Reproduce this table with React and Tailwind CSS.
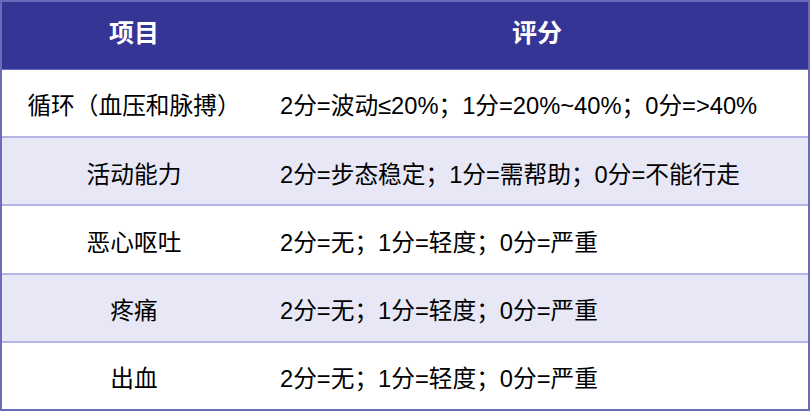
export default function App() {
  const rows = [
    {
      item: "循环（血压和脉搏）",
      score: "2分=波动≤20%；1分=20%~40%；0分=>40%",
    },
    { item: "活动能力", score: "2分=步态稳定；1分=需帮助；0分=不能行走" },
    { item: "恶心呕吐", score: "2分=无；1分=轻度；0分=严重" },
    { item: "疼痛", score: "2分=无；1分=轻度；0分=严重" },
    { item: "出血", score: "2分=无；1分=轻度；0分=严重" },
  ];

  return (
    <div
      className="w-[810px] h-[411px] bg-white"
      style={{ fontFamily: '"Liberation Sans", "Noto Sans CJK SC", sans-serif' }}
    >
      <div className="border-2 border-[#6b6bbd] h-full flex flex-col">
        <div className="grid grid-cols-[264px_1fr] h-[68px] bg-[#353596] border-b border-[#6b6bbd] text-white text-[25px] font-bold">
          <div className="flex items-center justify-center pb-1">项目</div>
          <div className="flex items-center justify-center pb-1">评分</div>
        </div>
        {rows.map((row, i) => (
          <div
            key={row.item}
            className={`grid grid-cols-[264px_1fr] flex-1 text-[23.7px] text-black ${
              i % 2 === 1 ? "bg-[#e7e7f5]" : "bg-white"
            } ${i < rows.length - 1 ? "border-b-2 border-[#b4b4e6]" : ""}`}
          >
            <div className="flex items-center justify-center pt-[8px]">{row.item}</div>
            <div className="flex items-center pl-[14px] pt-[8px]">{row.score}</div>
          </div>
        ))}
      </div>
    </div>
  );
}
